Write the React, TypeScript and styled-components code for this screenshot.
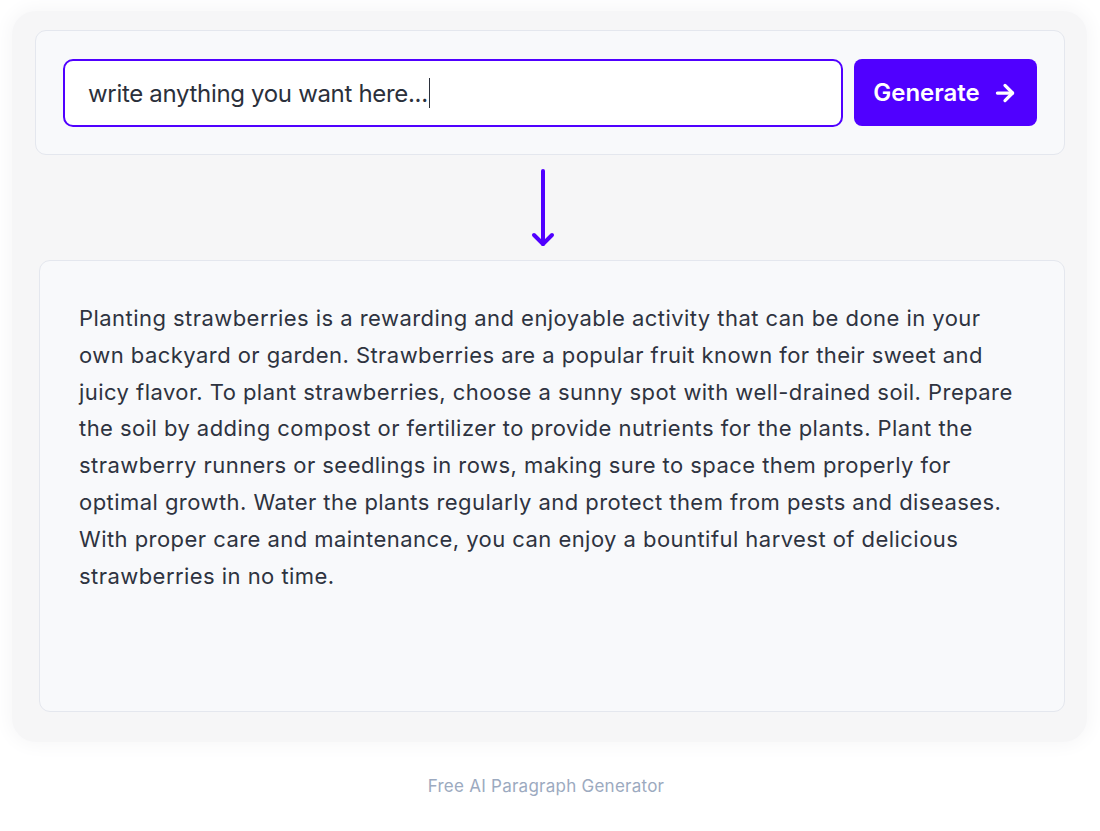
import styled, { createGlobalStyle } from 'styled-components'
import { ArrowRight } from 'lucide-react'

const GlobalStyle = createGlobalStyle`
  html, body {
    margin: 0;
    padding: 0;
    background: #ffffff;
  }
  body {
    font-family: Inter, "Noto Sans", "Liberation Sans", sans-serif;
    -webkit-font-smoothing: antialiased;
  }
`

const paragraph =
  'Planting strawberries is a rewarding and enjoyable activity that can be done in your own backyard or garden. Strawberries are a popular fruit known for their sweet and juicy flavor. To plant strawberries, choose a sunny spot with well-drained soil. Prepare the soil by adding compost or fertilizer to provide nutrients for the plants. Plant the strawberry runners or seedlings in rows, making sure to space them properly for optimal growth. Water the plants regularly and protect them from pests and diseases. With proper care and maintenance, you can enjoy a bountiful harvest of delicious strawberries in no time.'

export default function App() {
  return (
    <>
      <GlobalStyle />
      <Page>
        <Stage>
          <PromptCard>
            <PromptInput>
              write anything you want here...
              <Caret />
            </PromptInput>
            <GenerateButton>
              Generate
              <ArrowRight size={26} strokeWidth={3} />
            </GenerateButton>
          </PromptCard>
          <ArrowRow>
            <svg width='30' height='80' viewBox='0 0 30 80' fill='none'>
              <path
                d='M15 2 L15 75'
                stroke='#5000ff'
                strokeWidth='4'
                strokeLinecap='round'
              />
              <path
                d='M6 66 L15 75 L24 66'
                stroke='#5000ff'
                strokeWidth='4'
                strokeLinecap='round'
                strokeLinejoin='round'
              />
            </svg>
          </ArrowRow>
          <ResultCard>
            <ResultText>{paragraph}</ResultText>
          </ResultCard>
        </Stage>
        <Footer>Free AI Paragraph Generator</Footer>
      </Page>
    </>
  )
}

const Page = styled.div`
  display: flex;
  flex-direction: column;
  align-items: center;
  padding-top: 11px;
`

const Stage = styled.div`
  align-self: flex-start;
  margin-left: 12px;
  width: 1075px;
  height: 731px;
  box-sizing: border-box;
  padding: 19px 22px 0 23px;
  display: flex;
  flex-direction: column;
  align-items: flex-end;
  background: #f6f6f7;
  border-radius: 24px;
  box-shadow: 0 0 18px 4px #f7f7f8;
`

const PromptCard = styled.div`
  width: 1030px;
  height: 125px;
  box-sizing: border-box;
  padding: 28px 27px 0 27px;
  display: flex;
  gap: 11px;
  background: #f8f9fb;
  border: 1px solid #e4e7ee;
  border-radius: 11px;
`

const PromptInput = styled.div`
  flex: 1;
  height: 68px;
  box-sizing: border-box;
  padding-left: 23px;
  display: flex;
  align-items: center;
  background: #ffffff;
  border: 2.5px solid #5000ff;
  border-radius: 10px;
  font-size: 24px;
  color: #2b303b;
  letter-spacing: -0.32px;
`

const Caret = styled.span`
  display: inline-block;
  width: 1.5px;
  height: 30px;
  margin-left: 1px;
  background: #2b303b;
`

const GenerateButton = styled.button`
  width: 183px;
  height: 67px;
  flex-shrink: 0;
  display: flex;
  align-items: center;
  justify-content: center;
  gap: 12px;
  padding: 0 0 0 0;
  background: #5000ff;
  color: #ffffff;
  border: none;
  border-radius: 8px;
  font-family: inherit;
  font-size: 24px;
  font-weight: 600;
  cursor: pointer;
`

const ArrowRow = styled.div`
  width: 1030px;
  height: 105px;
  display: flex;
  justify-content: center;
  padding-top: 14px;
  box-sizing: border-box;
  & svg {
    margin-left: -14px;
  }
`

const ResultCard = styled.div`
  width: 1026px;
  height: 452px;
  box-sizing: border-box;
  padding: 39px 39px;
  background: #f8f9fb;
  border: 1px solid #e4e7ee;
  border-radius: 11px;
`

const ResultText = styled.p`
  margin: 0;
  font-size: 22px;
  line-height: 36.8px;
  letter-spacing: 0.45px;
  color: #2e3340;
`

const Footer = styled.div`
  margin-top: 34px;
  margin-right: 8px;
  font-size: 17px;
  color: #9caac0;
  letter-spacing: 0.25px;
`
